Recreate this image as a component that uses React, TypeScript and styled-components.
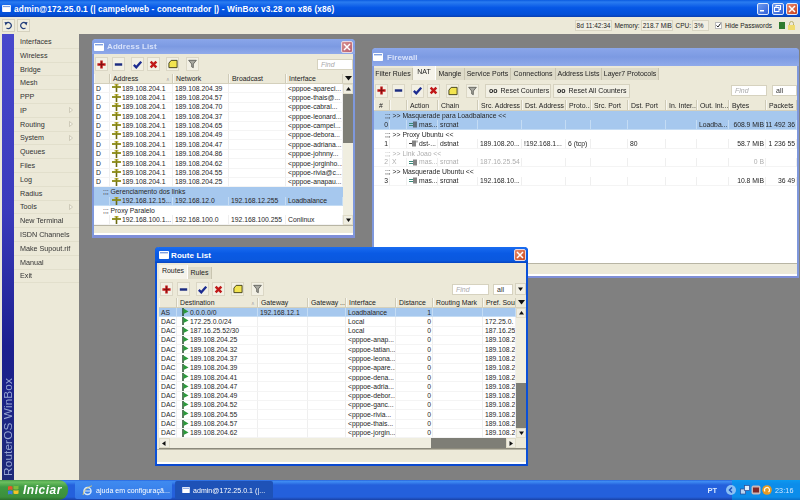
import React from 'react';
import styled, { createGlobalStyle } from 'styled-components';

const Global = createGlobalStyle`
  html, body { margin: 0; padding: 0; width: 800px; height: 500px; overflow: hidden; background: #808080; }
  * { box-sizing: border-box; }
  body { font-family: "Liberation Sans", Arial, sans-serif; font-size: 6.8px; color: #222; }
`;

const Screen = styled.div`
  width: 800px; height: 500px; display: flex; flex-direction: column; overflow: hidden;
  filter: blur(0.3px);
`;
const AppTitle = styled.div`
  height: 17px; flex: none; display: flex; align-items: center; padding: 0 2px 0 2px;
  background: linear-gradient(#0a5ae0 0%, #2a7cf0 12%, #0657e6 45%, #0350d8 85%, #0a3fb0 100%);
  color: #fff; font-weight: 700; font-size: 8.3px; letter-spacing: 0.13px;
`;
const AppTitleText = styled.span` margin-left: 3px; flex: 1; white-space: nowrap; `;
const WinBtn = styled.div<{ $red?: boolean }>`
  width: 12px; height: 12px; margin-left: 2.5px; border: 1px solid #dfe8fa; border-radius: 2px;
  display: flex; align-items: center; justify-content: center;
  background: ${p => p.$red ? 'linear-gradient(135deg,#e88a70,#c8401c)' : 'linear-gradient(135deg,#6f9cf0,#2f5fd8)'};
`;
const TopBar = styled.div`
  height: 17px; flex: none; background: #ece9d8; display: flex; align-items: center; padding: 0 4px 0 2px;
  font-size: 6.5px;
`;
const NavBtn = styled.div`
  width: 13px; height: 13px; margin-right: 2px; display: flex; align-items: center; justify-content: center;
  background: #f0eee0; border: 1px solid #d6d2bf; color: #28407a;
`;
const Status = styled.div` margin-left: auto; display: flex; align-items: center; white-space: nowrap; `;
const StatusBox = styled.div<{ $w: number }>`
  width: ${p => p.$w}px; height: 11px; line-height: 10px; padding-left: 1px; margin: 0 1px;
  border: 1px solid #d9d5c3; background: #f1efe3;
`;
const Check = styled.div`
  width: 7px; height: 7px; margin: 0 3px 0 5px; background: #fff; border: 1px solid #bbb;
  display: flex; align-items: center; justify-content: center;
`;
const GreenDot = styled.div` width: 6px; height: 7px; margin-left: 7px; background: #2e7a2e; `;

const Main = styled.div` flex: 1; display: flex; min-height: 0; `;
const Side = styled.div` width: 79px; flex: none; display: flex; background: #ece9d8; padding-left: 2px; `;
const Strip = styled.div`
  width: 12px; display: flex; justify-content: center; align-items: flex-end; padding-bottom: 4px;
  background: linear-gradient(#4848cc 0%, #3a3abc 40%, #1c2090 70%, #1e2a78 100%);
`;
const StripText = styled.div`
  writing-mode: vertical-rl; transform: rotate(180deg); color: #98a6d4; font-size: 11.8px; line-height: 12px;
  letter-spacing: 0.1px; white-space: nowrap;
`;
const Menu = styled.div` flex: 1; padding-top: 1px; `;
const MenuItem = styled.div`
  height: 13.8px; line-height: 13px; padding: 0 6px 0 6px; display: flex; justify-content: space-between; align-items: center;
  font-size: 7.2px; color: #333; border-bottom: 1px solid #e2dfcc; background: #ece9d8;
`;
const Canvas = styled.div` position: relative; flex: 1; background: #808080; `;

const Win = styled.section<{ $x: number; $y: number; $w: number; $h: number; $active?: boolean; $bb: number }>`
  position: absolute; left: ${p => p.$x}px; top: ${p => p.$y}px; width: ${p => p.$w}px; height: ${p => p.$h}px;
  display: flex; flex-direction: column; background: #ece9d8; border-radius: 4px 4px 0 0;
  border: 2px solid ${p => p.$active ? '#0a50d8' : '#7f98dc'}; border-top: 0; border-bottom: ${p => p.$bb}px solid ${p => p.$active ? '#0a4ad0' : '#7f8fd8'};
`;
const WinTitle = styled.div<{ $h: number; $pl: number; $active?: boolean }>`
  height: ${p => p.$h}px; flex: none; display: flex; align-items: center; margin: 0 -2px; padding: 0 2px 0 ${p => p.$pl}px;
  border-radius: 4px 4px 0 0; font-weight: 700; font-size: 8px; letter-spacing: 0.1px; white-space: nowrap;
  color: ${p => p.$active ? '#fff' : '#d8e2fa'};
  background: ${p => p.$active
    ? 'linear-gradient(#1a6cf0,#0a5ae4 40%,#0a58de 85%,#0644c0)'
    : 'linear-gradient(#8aa6ea,#7c9ae2 50%,#90aaea)'};
`;
const TitleLabel = styled.span<{ $ml: number }>` flex: 1; margin-left: ${p => p.$ml}px; `;
const CloseBtn = styled.div<{ $active?: boolean }>`
  width: 12px; height: 12px; border: 1px solid #e8d8e0; border-radius: 2px; margin-right: 0;
  display: flex; align-items: center; justify-content: center;
  background: ${p => p.$active ? 'linear-gradient(135deg,#e88a68,#cc4a20)' : 'linear-gradient(135deg,#d89090,#b86070)'};
`;
const Tabs = styled.div<{ $h: number; $pl: number }>`
  height: ${p => p.$h}px; flex: none; display: flex; align-items: flex-end; padding-left: ${p => p.$pl}px;
`;
const Tab = styled.div<{ $w: number; $active?: boolean }>`
  width: ${p => p.$w}px; height: ${p => p.$active ? 14 : 12}px; line-height: 11px; text-align: center; font-size: 7px; flex: none;
  background: ${p => p.$active ? '#f5f3ea' : '#dedbc9'}; border-right: 1px solid ${p => p.$active ? '#fff' : '#c8c4b0'};
  margin-bottom: 1px; white-space: nowrap;
`;
const Tools = styled.div<{ $h: number; $pl: number }>`
  height: ${p => p.$h}px; flex: none; display: flex; align-items: center; padding-left: ${p => p.$pl}px;
`;
const ToolBtn = styled.div<{ $ml?: number }>`
  width: 13px; height: 14px; flex: none; margin-left: ${p => p.$ml ?? 0}px;
  background: #f2f0e4; border: 1px solid #dbd7c5; display: flex; align-items: center; justify-content: center;
`;
const TextBtn = styled.div<{ $w: number; $ml: number }>`
  width: ${p => p.$w}px; height: 14px; margin-left: ${p => p.$ml}px; flex: none; font-size: 7px; white-space: nowrap;
  background: #f2f0e4; border: 1px solid #d6d2bf; display: flex; align-items: center; padding-left: 3px; gap: 3px;
`;
const Oo = styled.b` font-size: 7px; color: #222; `;
const RightTools = styled.div` margin-left: auto; display: flex; align-items: center; `;
const Find = styled.div<{ $w: number; $ml?: number }>`
  width: ${p => p.$w}px; height: 11px; margin-left: ${p => p.$ml ?? 0}px; line-height: 10px; padding-left: 3px; background: #fff;
  border: 1px solid #d6d2bf; color: #aaa; font-style: italic; font-size: 7px;
`;
const AllBox = styled(Find)` color: #333; font-style: normal; `;
const SmallBtn = styled.div`
  width: 11px; height: 12px; margin-left: 2px; background: #f2f0e4; border: 1px solid #d6d2bf;
  display: flex; align-items: center; justify-content: center;
`;

const TableBox = styled.div<{ $pl?: number }>`
  flex: 1; min-height: 0; display: flex; flex-direction: column; margin-left: ${p => p.$pl ?? 0}px;
`;
const Head = styled.div<{ $cols: string; $h: number }>`
  height: ${p => p.$h}px; flex: none; display: grid; grid-template-columns: ${p => p.$cols};
  background: #ece9d8; border-bottom: 1px solid #d4d0bc; font-size: 6.9px;
`;
const HeadCell = styled.div`
  padding: 0 2px; display: flex; justify-content: space-between; align-items: center; overflow: hidden; white-space: nowrap;
  border-right: 1px solid #cfcbb8; border-left: 1px solid #f8f7f0;
`;
const HeadCorner = styled.div` display: flex; align-items: center; justify-content: center; `;
const Sort = styled.span` color: #aaa; font-size: 5px; `;
const BodyWrap = styled.div` flex: 1; min-height: 0; display: flex; background: #fff; `;
const Rows = styled.div` flex: 1; min-width: 0; background: #fff; `;
const RowEl = styled.div<{ $cols?: string; $h: number; $sel?: boolean; $off?: boolean }>`
  height: ${p => p.$h}px; line-height: ${p => p.$h}px; display: ${p => p.$cols ? 'grid' : 'block'};
  grid-template-columns: ${p => p.$cols ?? 'none'};
  background: ${p => p.$sel ? '#a6c8ee' : '#fff'}; color: ${p => p.$off ? '#aeaeae' : '#262626'};
  white-space: nowrap; overflow: hidden;
`;
const Comment = styled.span<{ $pl: number }>` padding-left: ${p => p.$pl}px; `;
const Cell = styled.div<{ $right?: boolean; $sel?: boolean }>`
  padding: 0 ${p => p.$right ? 1 : 0}px 0 2px; overflow: hidden; text-align: ${p => p.$right ? 'right' : 'left'};
  border-right: 1px solid ${p => p.$sel ? '#c4dcf4' : '#efefef'}; border-bottom: 1px solid ${p => p.$sel ? '#c4dcf4' : '#f4f4f4'};
  display: flex; align-items: center; justify-content: ${p => p.$right ? 'flex-end' : 'flex-start'}; gap: 1px;
`;
const VBar = styled.div` width: 10px; flex: none; display: flex; flex-direction: column; background: #f4f2e8; `;
const ArrowBtn = styled.div`
  width: 10px; height: 10px; flex: none; background: #f0eee2; border: 1px solid #e0dcc8;
  display: flex; align-items: center; justify-content: center;
`;
const Thumb = styled.div<{ $size?: number }>`
  flex: ${p => p.$size ? `0 0 ${p.$size}px` : 1}; background: #f0eee0;
`;
const Track = styled.div<{ $size?: number }>`
  flex: ${p => p.$size ? `0 0 ${p.$size}px` : 1}; background: #7e7e76;
`;
const HBar = styled.div` height: 11px; flex: none; display: flex; background: #ece9d8; border-bottom: 1px solid #8c8a7c; `;
const HBtn = styled(ArrowBtn)` width: 10.5px; height: 10px; `;
const Corner = styled.div` width: 10px; flex: none; background: #ece9d8; `;
const StatusBar = styled.div<{ $h: number }>`
  height: ${p => p.$h}px; flex: none; background: #ece9d8; border-top: 1px solid #b8b5a4; border-bottom: 2px solid #fff;
`;

const Taskbar = styled.footer`
  height: 20px; flex: none; display: flex; align-items: stretch; color: #fff;
  background: linear-gradient(#2a66dc 0%, #3f8cf3 8%, #2460dc 25%, #2460dc 85%, #1941a5 100%);
`;
const Start = styled.div`
  width: 68px; flex: none; display: flex; align-items: center; gap: 4px; padding-left: 7px; border-radius: 0 9px 9px 0;
  background: linear-gradient(#4a9a4a 0%, #6cc060 10%, #3f9a42 35%, #3c8f3c 85%, #2b6e2b 100%);
  font: italic 700 12px "Liberation Sans", Arial, sans-serif; letter-spacing: 0.5px;
`;
const TaskBtn = styled.div<{ $w: number; $ml: number; $on?: boolean }>`
  width: ${p => p.$w}px; margin: 1px 0 1px ${p => p.$ml}px; border-radius: 2px; display: flex; align-items: center; gap: 3px;
  padding-left: 7px; font-size: 7px; white-space: nowrap; letter-spacing: 0.05px;
  background: ${p => p.$on ? '#1e52b7' : 'linear-gradient(#3f8bf0,#3477e6)'};
`;
const Lang = styled.div` margin-left: auto; align-self: center; font-size: 7.5px; font-weight: 700; color: #d8e8ff; margin-right: 15px; `;
const Tray = styled.div`
  width: 68px; flex: none; display: flex; align-items: center; gap: 1px;
  background: linear-gradient(#0c9af0,#0c8dea 20%,#0c8dea 85%,#0a70c8);
  font-size: 7.2px; color: #d4e8ff;
`;
const BackSlot = styled.div` margin: 0 3px 0 -6px; display: flex; `;
const Clock = styled.span` margin-left: 2px; letter-spacing: 0.1px; `;

const Plus = () => <svg width="9" height="9" viewBox="0 0 11 11"><path d="M4 0.5h3v3.5h3.5v3H7v3.5H4V7H0.5V4H4z" fill="#c01818" /><path d="M5.5 2v7M2.5 5.500h6" stroke="#781010" strokeWidth="1" /></svg>;
const Minus = () => <svg width="9" height="9" viewBox="0 0 11 11"><rect x="1" y="4" width="9" height="3" fill="#1c2c80" /></svg>;
const Tick = () => <svg width="9" height="9" viewBox="0 0 11 11"><path d="M1 6l3 3 6-7" fill="none" stroke="#1c2c90" strokeWidth="2.8" /></svg>;
const Cross = () => <svg width="9" height="9" viewBox="0 0 11 11"><path d="M2 2l7 7M9 2l-7 7" stroke="#c01818" strokeWidth="3" /></svg>;
const Note = () => <svg width="10" height="10" viewBox="0 0 11 11"><path d="M3.5 1.5h6.5v8h-9v-5z" fill="#f2e450" stroke="#3c3a18" strokeWidth="1" /></svg>;
const Funnel = () => <svg width="9" height="10" viewBox="0 0 11 11"><path d="M0.8 1h9.4L6.5 5.5V10l-2-1V5.500z" fill="#a8a8a0" stroke="#4c4c48" strokeWidth="0.9" /></svg>;
const RouteIcon = () => <svg width="9" height="8" viewBox="0 0 9 8" style={{ flex: 'none' }}><path d="M4.5 0v8" stroke="#6c6a10" strokeWidth="1.6" /><path d="M0 3h9" stroke="#8a8a14" strokeWidth="1.8" /><path d="M2.5 0.8h4" stroke="#b4a820" strokeWidth="1.2" /></svg>;
const Flag = () => <svg width="7" height="8" viewBox="0 0 7 8" style={{ flex: 'none', marginLeft: 3 }}><path d="M1 0v8" stroke="#14401c" strokeWidth="1.4" /><path d="M1.5 0.5L6.5 3.5 1.5 6z" fill="#2a9a3a" /></svg>;
const Mas = () => <svg width="9" height="7" viewBox="0 0 9 7" style={{ flex: 'none' }}><path d="M0 2.5h4M0 4.5h4" stroke="#3a8a7a" strokeWidth="1" /><path d="M5 0.5v6M7 0.5v6" stroke="#333" strokeWidth="1.2" /></svg>;
const Dst = () => <svg width="9" height="7" viewBox="0 0 9 7" style={{ flex: 'none' }}><path d="M0 3.5h3" stroke="#444" strokeWidth="1" /><path d="M4 0.5v6M6 0.5v6" stroke="#333" strokeWidth="1.2" /><path d="M8 0.5v2" stroke="#777" strokeWidth="1" /></svg>;
const Down = () => <svg width="7" height="5" viewBox="0 0 7 5"><path d="M0 0h7L3.5 4.5z" fill="#111" /></svg>;
const Up = () => <svg width="5" height="4" viewBox="0 0 5 4"><path d="M0 3.5h5L2.5 0z" fill="#111" /></svg>;
const DownS = () => <svg width="5" height="4" viewBox="0 0 5 4"><path d="M0 0.5h5L2.5 4z" fill="#111" /></svg>;
const Left = () => <svg width="4" height="5" viewBox="0 0 4 5"><path d="M3.5 0v5L0 2.5z" fill="#111" /></svg>;
const Right = () => <svg width="4" height="5" viewBox="0 0 4 5"><path d="M0.5 0v5L4 2.5z" fill="#111" /></svg>;
const Sub = () => <svg width="4" height="6" viewBox="0 0 4 6"><path d="M0.5 0.5L3.5 3 0.5 5.5z" fill="#f6f4ea" stroke="#b8b4a0" strokeWidth="0.6" /></svg>;
const Undo = () => <svg width="9" height="9" viewBox="0 0 9 9"><path d="M2 2.5A3 3 0 1 1 2.5 7" fill="none" stroke="#26407c" strokeWidth="1.2" /><path d="M0.5 1l3.5 0.5L1.5 4.5z" fill="#26407c" /></svg>;
const Redo = () => <svg width="9" height="9" viewBox="0 0 9 9"><path d="M7 2.5A3 3 0 1 0 6.5 7" fill="none" stroke="#26407c" strokeWidth="1.2" /><path d="M8.5 1L5 1.5l2.5 3z" fill="#26407c" /></svg>;
const WinIcon = ({ w = 10, h = 8 }: { w?: number; h?: number }) => <svg width={w} height={h} viewBox="0 0 10 8" style={{ flex: 'none' }}><rect width="10" height="8" rx="0.8" fill="#fff" /><rect x="1" y="1" width="8" height="1.4" fill="#7fa0e0" /></svg>;
const XMark = () => <svg width="8" height="8" viewBox="0 0 8 8"><path d="M1 1l6 6M7 1l-6 6" stroke="#fff" strokeWidth="1.5" /></svg>;
const Winflag = () => <svg width="12" height="12" viewBox="0 0 12 12"><path d="M1 2.5Q3 1.5 5.5 2.5V6Q3 5 1 6z" fill="#e8552a" /><path d="M6.5 1.5Q9 2.5 11.5 1.5V5Q9 6 6.5 5z" fill="#7cbc3c" /><path d="M1 7Q3 6 5.5 7v3.5Q3 9.5 1 10.5z" fill="#3c80e0" /><path d="M6.5 6q2.5 1 5 0v3.5q-2.5 1-5 0z" fill="#f4c428" /></svg>;
const IeLogo = () => <svg width="11" height="11" viewBox="0 0 11 11"><circle cx="5.5" cy="6" r="3.5" fill="none" stroke="#cfe6ff" strokeWidth="1.5" /><path d="M2 6h7" stroke="#cfe6ff" strokeWidth="1.1" /><path d="M1 10Q2 3 10 0.8" fill="none" stroke="#f0d060" strokeWidth="0.8" /></svg>;
const TrayBack = () => <svg width="10" height="10" viewBox="0 0 10 10"><circle cx="5" cy="5" r="5" fill="#8cc0f4" /><path d="M6 2.5L3.5 5 6 7.5" fill="none" stroke="#1a50c0" strokeWidth="1.5" /></svg>;
const TrayNet = () => <svg width="10" height="10" viewBox="0 0 10 10"><rect x="0.5" y="4" width="5" height="5" fill="#bcd4f0" stroke="#2c4a90" strokeWidth="0.7" /><rect x="4.5" y="0.5" width="5" height="5" fill="#e0ecfa" stroke="#2c4a90" strokeWidth="0.7" /></svg>;
const TrayRed = () => <svg width="10" height="10" viewBox="0 0 10 10"><rect x="0.5" y="0.5" width="9" height="9" rx="2" fill="#c8b8b8" /><rect x="2" y="2.5" width="6" height="5" fill="#802828" /></svg>;
const TrayOrange = () => <svg width="10" height="10" viewBox="0 0 10 10"><circle cx="5" cy="5" r="4.8" fill="#e89a20" /><path d="M3 6.5A2.5 2.5 0 1 1 6.5 7" fill="none" stroke="#fff8e0" strokeWidth="1.2" /></svg>;
const Lock = () => <svg width="9" height="9" viewBox="0 0 9 9" style={{ marginLeft: 2 }}><path d="M2.5 4V2.5a2 2 0 0 1 4 0V4" fill="none" stroke="#b8b070" strokeWidth="1" /><rect x="1" y="4" width="7" height="5" fill="#f0dc70" /></svg>;

type Row = { c?: string; cells?: React.ReactNode[]; sel?: boolean; off?: boolean };

const grid = (w: number[]) => w.map(n => `${n}px`).join(' ');

const Toolset = () => (
  <>
    <ToolBtn><Plus /></ToolBtn>
    <ToolBtn $ml={4}><Minus /></ToolBtn>
    <ToolBtn $ml={6}><Tick /></ToolBtn>
    <ToolBtn $ml={3}><Cross /></ToolBtn>
    <ToolBtn $ml={6}><Note /></ToolBtn>
    <ToolBtn $ml={7}><Funnel /></ToolBtn>
  </>
);

const TableRows = ({ rows, cols, h, right, pl }: { rows: Row[]; cols: number[]; h: number; right: number[]; pl: number }) => (
  <Rows>
    {rows.map((r, i) => r.c !== undefined
      ? <RowEl key={i} $h={h} $sel={r.sel} $off={r.off}><Comment $pl={pl}>{r.c}</Comment></RowEl>
      : <RowEl key={i} $h={h} $cols={grid(cols)} $sel={r.sel} $off={r.off}>
          {r.cells!.map((c, j) => <Cell key={j} $right={right.includes(j)} $sel={r.sel}>{c}</Cell>)}
        </RowEl>)}
  </Rows>
);

const A = (net: string, ifc: string): Row => ({ cells: ['D', <><RouteIcon />189.108.204.1</>, `189.108.204.${net}`, '', `<pppoe-${ifc}...`] });
const addrRows: Row[] = [
  A('39', 'apareci'), A('57', 'thais@'), A('70', 'cabral'), A('37', 'leonard'), A('65', 'campel'), A('49', 'debora'),
  A('47', 'adriana'), A('86', 'johnny'), A('62', 'jorginho'), A('55', 'rivia@c'), A('25', 'anapau'),
  { c: ';;; Gerenciamento dos links', sel: true },
  { sel: true, cells: ['', <><RouteIcon />192.168.12.15...</>, '192.168.12.0', '192.168.12.255', 'Loadbalance'] },
  { c: ';;; Proxy Paralelo' },
  { cells: ['', <><RouteIcon />192.168.100.1...</>, '192.168.100.0', '192.168.100.255', 'Conlinux'] },
];
const addrCols = [16, 63, 56, 57, 57];

const fwCols = [16, 17, 31, 40, 44, 44, 25, 37, 38, 31, 32, 37, 31];
const fwRows: Row[] = [
  { c: ';;; >> Masquerade para Loadbalance <<', sel: true },
  { sel: true, cells: ['0', '', <><Mas />mas...</>, 'srcnat', '', '', '', '', '', '', 'Loadba...', '608.9 MiB', '11 492 36'] },
  { c: ';;; >> Proxy Ubuntu <<' },
  { cells: ['1', '', <><Dst />dst-...</>, 'dstnat', '189.108.20...', '!192.168.1...', '6 (tcp)', '', '80', '', '', '58.7 MiB', '1 236 55'] },
  { c: ';;; >> Link Joao <<', off: true },
  { off: true, cells: ['2', 'X', <><Mas />mas...</>, 'srcnat', '187.16.25.54', '', '', '', '', '', '', '0 B', ''] },
  { c: ';;; >> Masquerade Ubuntu <<' },
  { cells: ['3', '', <><Mas />mas...</>, 'srcnat', '192.168.10...', '', '', '', '', '', '', '10.8 MiB', '36 49'] },
];

const rtCols = [18, 81, 50, 38, 50, 37, 50, 33];
const R = (t: string, d: string, ifc: string, dist: string, src: string, sel = false): Row => ({ sel, cells: [t, <><Flag />{d}</>, sel ? '192.168.12.1' : '', '', ifc, dist, '', src] });
const P = (n: string, ifc: string) => R('DAC', `189.108.204.${n}`, `<pppoe-${ifc}...`, '0', '189.108.2');
const rtRows: Row[] = [
  R('AS', '0.0.0.0/0', 'Loadbalance', '1', '', true),
  R('DAC', '172.25.0.0/24', 'Local', '0', '172.25.0.'),
  R('DAC', '187.16.25.52/30', 'Local', '0', '187.16.25'),
  P('25', 'anap'), P('32', 'tatian'), P('37', 'leona'), P('39', 'apare'), P('41', 'dena'), P('47', 'adria'),
  P('49', 'debor'), P('52', 'ganc'), P('55', 'rivia'), P('57', 'thais'), P('62', 'jorgin'),
];

const menu = ['Interfaces', 'Wireless', 'Bridge', 'Mesh', 'PPP', 'IP', 'Routing', 'System', 'Queues', 'Files', 'Log', 'Radius', 'Tools', 'New Terminal', 'ISDN Channels', 'Make Supout.rif', 'Manual', 'Exit'];
const withSub = ['IP', 'Routing', 'System', 'Tools'];

export default function App() {
  return (
    <Screen>
      <Global />
      <AppTitle>
        <WinIcon w={9} h={7} />
        <AppTitleText>admin@172.25.0.1 (| campeloweb - concentrador |) - WinBox v3.28 on x86 (x86)</AppTitleText>
        <WinBtn><svg width="6" height="6" viewBox="0 0 6 6"><rect y="4" width="4" height="1.5" fill="#fff" /></svg></WinBtn>
        <WinBtn><svg width="7" height="7" viewBox="0 0 7 7"><rect x="2" y="0.5" width="4.5" height="4" fill="none" stroke="#fff" /><rect x="0.5" y="2.5" width="4.5" height="4" fill="#4a78e0" stroke="#fff" /></svg></WinBtn>
        <WinBtn $red><XMark /></WinBtn>
      </AppTitle>
      <TopBar>
        <NavBtn><Undo /></NavBtn>
        <NavBtn><Redo /></NavBtn>
        <Status>
          <StatusBox $w={37}>8d 11:42:34</StatusBox>
          <span>&nbsp;Memory:</span>
          <StatusBox $w={32}>218.7 MiB</StatusBox>
          <span>&nbsp;CPU:</span>
          <StatusBox $w={17}>3%</StatusBox>
          <Check><svg width="5" height="5" viewBox="0 0 5 5"><path d="M0.5 2.5l1.5 1.5 2.500-3.500" fill="none" stroke="#222" strokeWidth="1" /></svg></Check>
          <span>Hide Passwords</span>
          <GreenDot />
          <Lock />
        </Status>
      </TopBar>
      <Main>
        <Side>
          <Strip><StripText>RouterOS WinBox</StripText></Strip>
          <Menu>
            {menu.map(m => <MenuItem key={m}><span>{m}</span>{withSub.includes(m) && <Sub />}</MenuItem>)}
          </Menu>
        </Side>
        <Canvas>
          <Win $x={13} $y={5} $w={263} $h={199} $bb={3}>
            <WinTitle $h={15} $pl={2}>
              <WinIcon />
              <TitleLabel $ml={3}>Address List</TitleLabel>
              <CloseBtn><XMark /></CloseBtn>
            </WinTitle>
            <Tools $h={20} $pl={1}>
              <Toolset />
              <RightTools><Find $w={36}>Find</Find></RightTools>
            </Tools>
            <TableBox>
              <Head $cols={grid([...addrCols, 10])} $h={10}>
                <HeadCell />
                <HeadCell><span>Address</span><Sort>∧</Sort></HeadCell>
                <HeadCell>Network</HeadCell>
                <HeadCell>Broadcast</HeadCell>
                <HeadCell>Interface</HeadCell>
                <HeadCorner><Down /></HeadCorner>
              </Head>
              <BodyWrap>
                <TableRows rows={addrRows} cols={addrCols} h={9.4} right={[]} pl={9} />
                <VBar>
                  <ArrowBtn><Up /></ArrowBtn>
                  <Track $size={49} />
                  <Thumb />
                  <ArrowBtn><DownS /></ArrowBtn>
                </VBar>
              </BodyWrap>
            </TableBox>
            <StatusBar $h={10} />
          </Win>

          <Win $x={293} $y={14} $w={427} $h={230} $bb={2}>
            <WinTitle $h={18} $pl={1}>
              <WinIcon />
              <TitleLabel $ml={4}>Firewall</TitleLabel>
            </WinTitle>
            <Tabs $h={15} $pl={0}>
              <Tab $w={39}>Filter Rules</Tab>
              <Tab $w={23} $active>NAT</Tab>
              <Tab $w={29}>Mangle</Tab>
              <Tab $w={46}>Service Ports</Tab>
              <Tab $w={45}>Connections</Tab>
              <Tab $w={46}>Address Lists</Tab>
              <Tab $w={57}>Layer7 Protocols</Tab>
            </Tabs>
            <Tools $h={19} $pl={1}>
              <Toolset />
              <TextBtn $w={66} $ml={6}><Oo>oo</Oo>Reset Counters</TextBtn>
              <TextBtn $w={77} $ml={2}><Oo>oo</Oo>Reset All Counters</TextBtn>
              <RightTools>
                <Find $w={36}>Find</Find>
                <AllBox $w={25} $ml={5}>all</AllBox>
              </RightTools>
            </Tools>
            <TableBox>
              <Head $cols={grid(fwCols)} $h={11}>
                <HeadCell><span>&nbsp;#</span></HeadCell>
                <HeadCell />
                <HeadCell>Action</HeadCell>
                <HeadCell>Chain</HeadCell>
                <HeadCell>Src. Address</HeadCell>
                <HeadCell>Dst. Address</HeadCell>
                <HeadCell>Proto...</HeadCell>
                <HeadCell>Src. Port</HeadCell>
                <HeadCell>Dst. Port</HeadCell>
                <HeadCell>In. Inter...</HeadCell>
                <HeadCell>Out. Int...</HeadCell>
                <HeadCell>Bytes</HeadCell>
                <HeadCell>Packets</HeadCell>
              </Head>
              <BodyWrap>
                <TableRows rows={fwRows} cols={fwCols} h={9.4} right={[0, 11, 12]} pl={11} />
              </BodyWrap>
            </TableBox>
            <StatusBar $h={13} />
          </Win>

          <Win $x={76} $y={213} $w={373} $h={219} $active $bb={2}>
            <WinTitle $h={16} $pl={4} $active>
              <WinIcon />
              <TitleLabel $ml={2}>Route List</TitleLabel>
              <CloseBtn $active><XMark /></CloseBtn>
            </WinTitle>
            <Tabs $h={17} $pl={2}>
              <Tab $w={29} $active>Routes</Tab>
              <Tab $w={24}>Rules</Tab>
            </Tabs>
            <Tools $h={18} $pl={3}>
              <Toolset />
              <RightTools>
                <Find $w={37}>Find</Find>
                <AllBox $w={20} $ml={4}>all</AllBox>
                <SmallBtn><DownS /></SmallBtn>
              </RightTools>
            </Tools>
            <TableBox $pl={2}>
              <Head $cols={grid([...rtCols, 10])} $h={10}>
                <HeadCell />
                <HeadCell><span>Destination</span><Sort>∧</Sort></HeadCell>
                <HeadCell>Gateway</HeadCell>
                <HeadCell>Gateway ...</HeadCell>
                <HeadCell>Interface</HeadCell>
                <HeadCell>Distance</HeadCell>
                <HeadCell>Routing Mark</HeadCell>
                <HeadCell>Pref. Sour</HeadCell>
                <HeadCorner><Down /></HeadCorner>
              </Head>
              <BodyWrap>
                <TableRows rows={rtRows} cols={rtCols} h={9.3} right={[5]} pl={4} />
                <VBar>
                  <ArrowBtn><Up /></ArrowBtn>
                  <Thumb $size={65} />
                  <Track />
                  <ArrowBtn><DownS /></ArrowBtn>
                </VBar>
              </BodyWrap>
              <HBar>
                <HBtn><Left /></HBtn>
                <Thumb />
                <Track $size={75} />
                <HBtn><Right /></HBtn>
                <Corner />
              </HBar>
            </TableBox>
            <StatusBar $h={15} />
          </Win>
        </Canvas>
      </Main>
      <Taskbar>
        <Start><Winflag />Iniciar</Start>
        <TaskBtn $w={97} $ml={7}><IeLogo />ajuda em configuraçã...</TaskBtn>
        <TaskBtn $w={98} $ml={3} $on><WinIcon w={8} h={6} />admin@172.25.0.1 (|...</TaskBtn>
        <Lang>PT</Lang>
        <Tray>
          <BackSlot><TrayBack /></BackSlot>
          <TrayNet />
          <TrayRed />
          <TrayOrange />
          <Clock>23:16</Clock>
        </Tray>
      </Taskbar>
    </Screen>
  );
}
